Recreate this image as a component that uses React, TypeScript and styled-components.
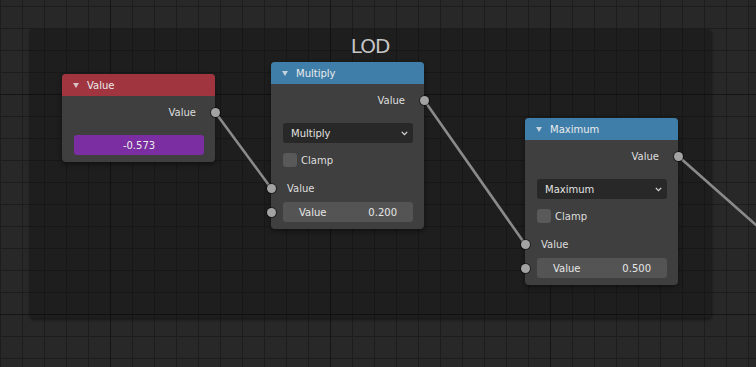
import React from 'react'
import styled, { createGlobalStyle } from 'styled-components'

const GlobalStyle = createGlobalStyle`
  html, body {
    margin: 0;
    padding: 0;
    background: #282828;
    overflow: hidden;
  }
  body {
    font-family: 'DejaVu Sans', 'Liberation Sans', sans-serif;
  }
`

interface NodeProps {
  title: string
  color: string
  x: number
  y: number
  children: React.ReactNode
}

function Node({ title, color, x, y, children }: NodeProps) {
  return (
    <NodeBox $x={x} $y={y}>
      <Header $color={color}>
        <svg width="6" height="5" viewBox="0 0 6 5">
          <path d="M0 0 L6 0 L3 5 Z" fill="rgba(230,230,230,0.8)" />
        </svg>
        {title}
      </Header>
      <Body>{children}</Body>
    </NodeBox>
  )
}

function Dropdown({ label }: { label: string }) {
  return (
    <Select>
      {label}
      <svg width="7" height="5" viewBox="0 0 7 5">
        <path d="M0.8 0.8 L3.5 3.6 L6.2 0.8" stroke="#dcdcdc" strokeWidth="1.2" fill="none" />
      </svg>
    </Select>
  )
}

function MathNode({ title, x, y, value }: { title: string; x: number; y: number; value: string }) {
  return (
    <Node title={title} color="#3f7ea9" x={x} y={y}>
      <OutputRow>
        Value
        <Socket $side="right" />
      </OutputRow>
      <Dropdown label={title} />
      <CheckRow>
        <Check />
        Clamp
      </CheckRow>
      <InputRow>
        <Socket $side="left" />
        Value
      </InputRow>
      <NumberField>
        <Socket $side="left" />
        <span>Value</span>
        <span>{value}</span>
      </NumberField>
    </Node>
  )
}

export default function App() {
  return (
    <>
      <GlobalStyle />
      <Canvas>
        <Frame>
          <FrameLabel>LOD</FrameLabel>
        </Frame>
        <Links width="756" height="367" viewBox="0 0 756 367">
          <line x1="215" y1="112" x2="271" y2="188" />
          <line x1="424" y1="100" x2="525" y2="244" />
          <line x1="678" y1="156" x2="800" y2="264" />
        </Links>

        <Node title="Value" color="#a0343f" x={62} y={74}>
          <OutputRow>
            Value
            <Socket $side="right" />
          </OutputRow>
          <ColorField>-0.573</ColorField>
        </Node>

        <MathNode title="Multiply" x={271} y={62} value="0.200" />
        <MathNode title="Maximum" x={525} y={118} value="0.500" />
      </Canvas>
    </>
  )
}

const Canvas = styled.div`
  position: relative;
  width: 756px;
  height: 367px;
  overflow: hidden;
  background-color: #282828;
  background-image:
    linear-gradient(to right, #151515 1px, transparent 1px),
    linear-gradient(to bottom, #151515 1px, transparent 1px),
    linear-gradient(to right, #1d1d1d 1px, transparent 1px),
    linear-gradient(to bottom, #1d1d1d 1px, transparent 1px);
  background-size: 220px 220px, 220px 220px, 22px 22px, 22px 22px;
  background-position: 110px 0, 0 94px, 0 0, 0 6px;
`

const Frame = styled.div`
  position: absolute;
  left: 29px;
  top: 29px;
  width: 682px;
  height: 289px;
  border-radius: 4px;
  background: rgba(10, 10, 10, 0.3);
  box-shadow: 1px 2px 3px rgba(0, 0, 0, 0.4);
  display: flex;
  justify-content: center;
`

const FrameLabel = styled.div`
  margin-top: 5px;
  font-size: 20px;
  line-height: 24px;
  letter-spacing: -1px;
  color: #c6c6c6;
`

const Links = styled.svg`
  position: absolute;
  left: 0;
  top: 0;
  line {
    stroke: #8a8a8a;
    stroke-width: 2.6;
    stroke-linecap: round;
  }
`

const NodeBox = styled.div<{ $x: number; $y: number }>`
  position: absolute;
  left: ${(p) => p.$x}px;
  top: ${(p) => p.$y}px;
  width: 153px;
  border-radius: 4px;
  background: #3f3f3f;
  box-shadow: 0 2px 5px rgba(0, 0, 0, 0.45);
  font-size: 10px;
  color: #dedede;
`

const Header = styled.div<{ $color: string }>`
  height: 22px;
  display: flex;
  align-items: center;
  gap: 8px;
  padding-left: 11px;
  border-radius: 4px 4px 0 0;
  background: ${(p) => p.$color};
  color: #ebebeb;
`

const Body = styled.div`
  display: flex;
  flex-direction: column;
  padding: 5px 11px 7px 12px;
`

const Socket = styled.span<{ $side: 'left' | 'right' }>`
  position: absolute;
  top: 50%;
  ${(p) => (p.$side === 'left' ? 'left: -16.5px;' : 'right: -15.5px;')}
  width: 9px;
  height: 9px;
  margin-top: -4.5px;
  border-radius: 50%;
  background: #a3a3a3;
  box-shadow: 0 0 0 1px rgba(0, 0, 0, 0.45);
`

const OutputRow = styled.div`
  position: relative;
  height: 22px;
  display: flex;
  align-items: center;
  justify-content: flex-end;
  padding-right: 8px;
`

const InputRow = styled.div`
  position: relative;
  height: 22px;
  margin-top: 6px;
  display: flex;
  align-items: center;
  padding-left: 4px;
`

const ColorField = styled.div`
  margin-top: 12px;
  height: 20px;
  border-radius: 3px;
  background: #7a2ea1;
  display: flex;
  align-items: center;
  justify-content: center;
  color: #ececec;
`

const Select = styled.div`
  margin-top: 12px;
  height: 20px;
  border-radius: 3px;
  background: #282828;
  display: flex;
  align-items: center;
  justify-content: space-between;
  padding: 0 5px 0 8px;
  color: #e2e2e2;
`

const CheckRow = styled.div`
  margin-top: 6px;
  height: 22px;
  display: flex;
  align-items: center;
  gap: 4px;
`

const Check = styled.span`
  width: 14px;
  height: 14px;
  border-radius: 3px;
  background: #595959;
`

const NumberField = styled.div`
  position: relative;
  margin-top: 3px;
  height: 20px;
  border-radius: 3px;
  background: #545454;
  display: flex;
  align-items: center;
  justify-content: space-between;
  padding: 0 16px;
  color: #e6e6e6;
`
